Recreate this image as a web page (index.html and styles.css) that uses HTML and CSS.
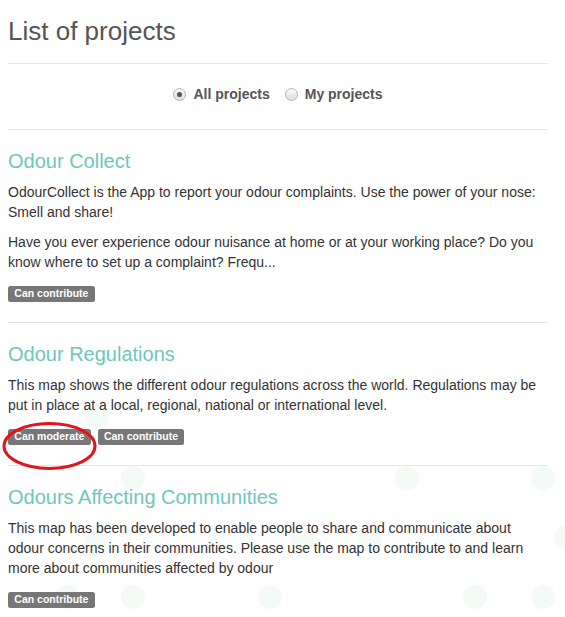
FILE: index.html
```html
<!DOCTYPE html>
<html lang="en">
<head>
<meta charset="utf-8">
<title>List of projects</title>
<link rel="stylesheet" href="styles.css">
</head>
<body>
<svg class="backdrop" width="565" height="617" viewBox="0 0 565 617" aria-hidden="true">
  <g fill="#f4fbf7">
    <circle cx="97" cy="417" r="12"/>
    <circle cx="133" cy="478" r="12"/>
    <circle cx="407" cy="478" r="12"/>
    <circle cx="543" cy="478" r="12"/>
    <circle cx="97" cy="540" r="12"/>
    <circle cx="302" cy="540" r="12"/>
    <circle cx="370" cy="540" r="12"/>
    <circle cx="566" cy="537" r="12"/>
    <circle cx="67" cy="597" r="12"/>
    <circle cx="133" cy="597" r="12"/>
    <circle cx="270" cy="597" r="12"/>
    <circle cx="475" cy="597" r="12"/>
    <circle cx="543" cy="597" r="12"/>
  </g>
</svg>
<main class="page">
  <h1 class="title">List of projects</h1>
  <hr class="rule">
  <div class="filter">
    <label class="option"><span class="radio checked"></span>All projects</label>
    <label class="option"><span class="radio"></span>My projects</label>
  </div>
  <hr class="rule">
  <section class="project">
    <h3 class="project-name">Odour Collect</h3>
    <p class="desc">OdourCollect is the App to report your odour complaints. Use the power of your nose: Smell and share!</p>
    <p class="desc">Have you ever experience odour nuisance at home or at your working place? Do you know where to set up a complaint? Frequ...</p>
    <div class="badges"><span class="badge">Can contribute</span></div>
  </section>
  <hr class="rule">
  <section class="project">
    <h3 class="project-name">Odour Regulations</h3>
    <p class="desc">This map shows the different odour regulations across the world. Regulations may be put in place at a local, regional, national or international level.</p>
    <div class="badges"><span class="badge">Can moderate</span><span class="badge">Can contribute</span></div>
  </section>
  <hr class="rule">
  <section class="project">
    <h3 class="project-name">Odours Affecting Communities</h3>
    <p class="desc">This map has been developed to enable people to share and communicate about odour concerns in their communities. Please use the map to contribute to and learn more about communities affected by odour</p>
    <div class="badges"><span class="badge">Can contribute</span></div>
  </section>
</main>
<svg class="annotation" width="565" height="617" viewBox="0 0 565 617" aria-hidden="true">
  <ellipse cx="49.5" cy="446" rx="45.5" ry="22.5" fill="none" stroke="#e3141b" stroke-width="3"/>
</svg>
</body>
</html>
```
FILE: styles.css
```css
html, body {
  margin: 0;
  padding: 0;
  background: #fff;
}

body {
  position: relative;
  width: 565px;
  height: 617px;
  overflow: hidden;
  font-family: "Liberation Sans", Arial, sans-serif;
  font-size: 14px;
  line-height: 20px;
  color: #333;
}

.backdrop {
  position: absolute;
  left: 0;
  top: 0;
  z-index: 0;
}

.annotation {
  position: absolute;
  left: 0;
  top: 0;
  z-index: 2;
  pointer-events: none;
}

.page {
  position: relative;
  z-index: 1;
  width: 540px;
  margin: 0 0 0 8px;
}

.title {
  margin: 17px 0 17px;
  font-size: 26px;
  line-height: 29px;
  font-weight: normal;
  color: #555;
}

.rule {
  margin: 0;
  border: 0;
  border-top: 1px solid #e6e6e6;
  height: 0;
}

.filter {
  display: flex;
  justify-content: center;
  gap: 15px;
  padding: 20px 0 25px;
  font-weight: bold;
  color: #555;
}

.option {
  display: flex;
  align-items: center;
  gap: 7px;
}

.radio {
  box-sizing: border-box;
  width: 13px;
  height: 13px;
  border-radius: 50%;
  border: 1px solid #b5b5b5;
  background: linear-gradient(#fbfbfb, #dedede);
  display: flex;
  align-items: center;
  justify-content: center;
}

.radio.checked::after {
  content: "";
  width: 5px;
  height: 5px;
  border-radius: 50%;
  background: #555;
}

.project {
  padding: 20px 0 20px;
}

.project-name {
  margin: 0 0 10px;
  font-size: 20px;
  line-height: 22px;
  font-weight: normal;
  color: #6ec6c0;
}

.desc {
  margin: 0 0 10px;
}

.badges {
  display: flex;
  gap: 7px;
  padding-top: 4px;
}

.badge {
  display: inline-block;
  height: 16px;
  padding: 0 6.3px;
  font-size: 10.5px;
  line-height: 15px;
  font-weight: bold;
  color: #fff;
  background: #777;
  border-radius: 2.5px;
  white-space: nowrap;
}
```
